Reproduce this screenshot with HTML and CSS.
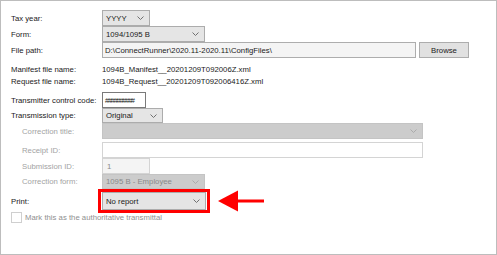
FILE: index.html
```html
<!DOCTYPE html>
<html lang="en">
<head>
<meta charset="UTF-8">
<title>Transmittal settings</title>
<link rel="stylesheet" href="styles.css">
</head>
<body>

<div class="panel">
  <div class="row">
    <span class="lbl">Tax year:</span>
    <div class="combo w-tax">YYYY<svg class="chev" width="7" height="4" viewBox="0 0 7 4"><polyline points="0.5,0.5 3.5,3.5 6.5,0.5"/></svg></div>
  </div>
  <div class="row">
    <span class="lbl">Form:</span>
    <div class="combo w-form">1094/1095 B<svg class="chev" width="7" height="4" viewBox="0 0 7 4"><polyline points="0.5,0.5 3.5,3.5 6.5,0.5"/></svg></div>
  </div>
  <div class="row">
    <span class="lbl">File path:</span>
    <div class="field readonly w-path">D:\ConnectRunner\2020.11-2020.11\ConfigFiles\</div>
    <div class="btn">Browse</div>
  </div>

  <div class="row text first">
    <span class="lbl">Manifest file name:</span>
    <span>1094B_Manifest__20201209T092006Z.xml</span>
  </div>
  <div class="row text">
    <span class="lbl">Request file name:</span>
    <span>1094B_Request__20201209T092006416Z.xml</span>
  </div>

  <div class="row gap">
    <span class="lbl">Transmitter control code:</span>
    <div class="field dark w-tcc"><span class="hashes">##########</span></div>
  </div>
  <div class="row short">
    <span class="lbl">Transmission type:</span>
    <div class="combo w-type">Original<svg class="chev" width="7" height="4" viewBox="0 0 7 4"><polyline points="0.5,0.5 3.5,3.5 6.5,0.5"/></svg></div>
  </div>
  <div class="row">
    <span class="lbl sub">Correction title:</span>
    <div class="combo off w-wide"><span></span><svg class="chev" width="7" height="4" viewBox="0 0 7 4"><polyline points="0.5,0.5 3.5,3.5 6.5,0.5"/></svg></div>
  </div>
  <div class="row small-gap">
    <span class="lbl sub">Receipt ID:</span>
    <div class="field light w-wide"></div>
  </div>
  <div class="row">
    <span class="lbl sub">Submission ID:</span>
    <div class="field readonly light dim w-tax">1</div>
  </div>
  <div class="row short">
    <span class="lbl sub">Correction form:</span>
    <div class="combo off w-form">1095 B - Employee<svg class="chev" width="7" height="4" viewBox="0 0 7 4"><polyline points="0.5,0.5 3.5,3.5 6.5,0.5"/></svg></div>
  </div>

  <div class="row print">
    <span class="lbl">Print:</span>
    <div class="highlight">
      <div class="combo tall">No report<svg class="chev" width="7" height="4" viewBox="0 0 7 4"><polyline points="0.5,0.5 3.5,3.5 6.5,0.5"/></svg></div>
    </div>
    <svg class="arrow" width="46" height="22" viewBox="0 0 46 22">
      <polygon points="0,11 20,0.5 20,21.5"/>
      <rect x="19" y="9.5" width="27" height="3"/>
    </svg>
  </div>

  <div class="row check">
    <span class="box"></span>
    <span>Mark this as the authoritative transmittal</span>
  </div>
</div>

</body>
</html>
```

FILE: styles.css
```css
body {
  margin: 0;
  font-family: "Liberation Sans", Arial, sans-serif;
  font-size: 7.75px;
  color: #1a1a1a;
  background: #fff;
}

.panel {
  width: 497px;
  height: 255px;
  box-sizing: border-box;
  border: 1px solid #bdbdbd;
  padding: 9px 0 0 10px;
}

.row {
  display: flex;
  align-items: center;
  height: 16px;
}
.row.short { height: 15px; }
.row.text { height: 12px; }
.row.first { margin-top: 5px; }
.row.gap { margin-top: 5px; }
.row.small-gap { margin-top: 3px; }

.lbl {
  width: 91px;
  flex: none;
  white-space: nowrap;
}
.lbl.sub {
  width: 80px;
  padding-left: 11px;
  color: #a3a3a3;
}

/* combos / inputs */
.combo, .field, .btn {
  box-sizing: border-box;
  height: 16px;
  display: flex;
  align-items: center;
  white-space: nowrap;
}
.short .combo { height: 15px; }

.combo {
  border: 1px solid #acacac;
  background: #e5e5e5;
  justify-content: space-between;
  padding: 0 5px 0 3px;
}
.combo.off {
  background: #cccccc;
  border-color: #c4c4c4;
  color: #8a8a8a;
}
.chev { fill: none; stroke: #707070; stroke-width: 1; }
.off .chev { stroke: #ababab; }

.field {
  border: 1px solid #adadad;
  background: #fff;
  padding: 0 2px;
}
.field.readonly { background: #f4f4f4; }
.field.dark { border-color: #7a7a7a; }
.field.light { border-color: #d4d4d4; }
.field.dim { color: #8a8a8a; padding-left: 4px; }

.hashes { letter-spacing: -1px; font-size: 7px; }

.btn {
  width: 50px;
  margin-left: 3px;
  justify-content: center;
  border: 1px solid #adadad;
  background: #e1e1e1;
}

.w-tax { width: 48px; }
.w-form { width: 103px; }
.w-path { width: 314px; }
.w-tcc { width: 44px; }
.w-type { width: 61px; }
.w-wide { width: 321px; }

/* highlighted print option */
.row.print { height: 24px; margin-top: 0; }
.highlight {
  margin-left: -4px;
  border: 3px solid #ff0000;
  padding: 0 1px;
}
.combo.tall { width: 104px; height: 18px; }
.arrow { margin-left: 8px; fill: #ff0000; }

.row.check {
  height: 10px;
  margin-top: -1px;
  color: #8f8f8f;
}
.box {
  width: 9px;
  height: 9px;
  border: 1px solid #cfcfcf;
  background: #fff;
  margin-right: 3px;
}
```
